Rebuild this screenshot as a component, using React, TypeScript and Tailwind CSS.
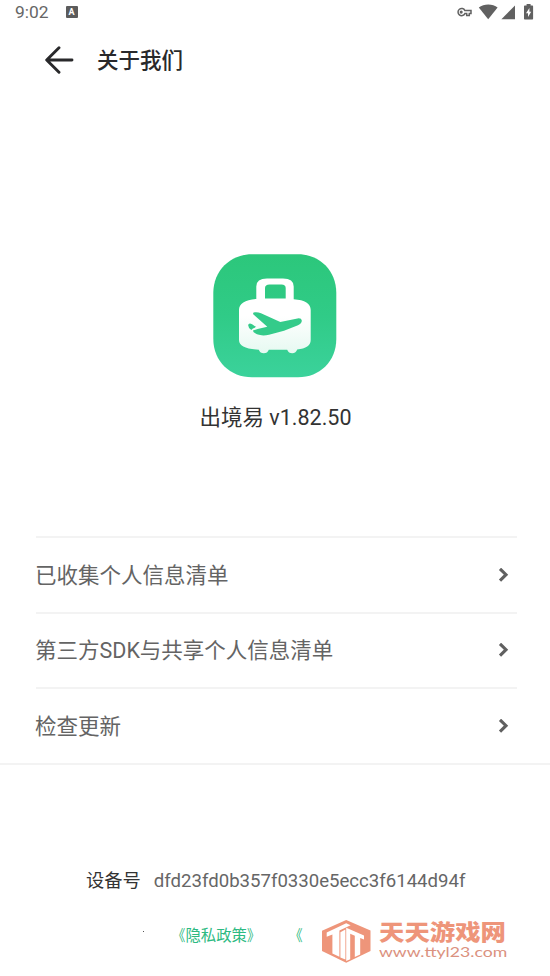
const rows = ["已收集个人信息清单", "第三方SDK与共享个人信息清单", "检查更新"];

function StatusBar() {
  return (
    <div className="flex h-6 items-center pl-[15px] pr-[14px] text-[#666666]">
      <span className="text-[17.4px] leading-6">9:02</span>
      <span className="ml-[17px] flex h-3 w-3 items-center justify-center rounded-[1px] bg-[#5c5c5c] text-[9px] leading-3 font-bold text-white">
        A
      </span>
      <svg
        className="ml-auto"
        width="80"
        height="18"
        viewBox="0 0 80 18"
        fill="#616161"
      >
        <g fill="none" stroke="#616161" strokeWidth="1.5">
          <path d="M8.9 7.6a3.6 3.6 0 1 0 0 3h1.8v2h2.6v-2h1.7V7.6z" />
          <circle cx="5.2" cy="9.1" r="0.8" />
        </g>
        <path d="M32.2 16.2 22.8 4.6c5-4.1 14-4.1 18.8 0z" />
        <path d="M45.4 16.2 59 2.5v13.7z" />
        <path d="M70.6 2.6V1.1h4v1.5h1.5c.6 0 1 .4 1 1v11.9c0 .6-.4 1-1 1H69c-.6 0-1-.4-1-1V3.6c0-.6.4-1 1-1z" />
        <path fill="#fff" d="M73.4 5 70 10.2h2v3.9l3.2-5.3h-1.8z" />
      </svg>
    </div>
  );
}

function Logo() {
  return (
    <svg width="124" height="124" viewBox="0 0 124 124">
      <defs>
        <linearGradient id="tile" x1="0" y1="0" x2="0" y2="1">
          <stop offset="0" stopColor="#2cc77b" />
          <stop offset="0.5" stopColor="#30cb87" />
          <stop offset="1" stopColor="#3bd29b" />
        </linearGradient>
        <linearGradient id="bag" x1="0" y1="0" x2="0" y2="1">
          <stop offset="0.5" stopColor="#ffffff" />
          <stop offset="1" stopColor="#e6f9f1" />
        </linearGradient>
      </defs>
      <path
        fill="url(#tile)"
        d="M39 0.3H85C107 0.3 123.3 17 123.3 39V85C123.3 107 107 123.3 85 123.3H39C17 123.3 0.3 107 0.3 85V39C0.3 17 17 0.3 39 0.3Z"
      />
      <path
        fill="url(#bag)"
        fillRule="evenodd"
        d="M43.3 45V32.5Q43.3 24.5 54 24.5H70Q80.7 24.5 80.7 32.5V45.2C92 46 97.7 49.5 97.7 56V86C97.7 91.5 93 94.5 84.2 95.6Q83 99.3 79.3 99.3Q75.5 99.3 74.2 95.7H55.8Q54.5 99.3 50.8 99.3Q47.1 99.3 45.8 95.8C33 95 26 92 26 86V56C26 49.5 32 46 43.3 45ZM52 44.6H72.7V34Q72.7 30.4 68.5 30.4H56.5Q52 30.4 52 34Z"
      />
      <path
        fill="#34cb8a"
        d="M40.2 60.2Q39.6 58.2 42 58.2Q45 57.9 48 59.2L67.3 67.9L84.5 64.4Q88.5 63.8 88.8 66.5Q88.9 69.2 85 71.2L71 76.8L56 80.8Q49 82.3 44 80.3Q39.5 78.2 40 76.5L44.6 75L54.3 72.8Z"
      />
      <path
        fill="#34cb8a"
        d="M35.1 70.9Q36 68.3 39.1 70.2L43.2 73.1Q39.2 74 38.3 76Q35.4 74.3 35.1 70.9Z"
      />
    </svg>
  );
}

function Watermark() {
  return (
    <div className="flex h-12 w-[190px] items-start">
      <svg className="mt-px" width="50" height="44" viewBox="0 0 50 44">
        <path fill="#ee957a" d="M24.2 0 48.5 10.5V31L24.2 42.7 0 31V10.8z" />
        <path
          fill="#fff"
          d="M4.7 12.4 24.2 3.2l4.4 2-11.2 5.3v26.3L10.4 33.6V14.4l-5.7 2.4z"
        />
        <path fill="#fff" d="M18.4 12.2 23.4 9.6v30l-5-2.2z" />
        <path
          fill="#fff"
          d="M24.2 7.8 42 15.4v4.2l-3.8-1.6v16.4l-5.4 2.5V15.8l-4.6-2v25.4l-4 1.8z"
        />
      </svg>
      <div className="ml-[7px] w-[128px] pt-[2px]">
        <div className="h-[23px] scale-y-[0.85] text-[25.4px] leading-[23px] font-black whitespace-nowrap text-[#ee957a]">
          天天游戏网
        </div>
        <div className="h-[16px] w-[98px] origin-left scale-x-[1.28] font-[Lato,sans-serif] text-[13.8px] leading-[16px] whitespace-nowrap text-[#db9280]">
          www.ttyl23.com
        </div>
      </div>
    </div>
  );
}

export default function App() {
  return (
    <div className="flex h-[976px] w-[550px] flex-col overflow-hidden bg-white font-[Roboto,'Noto_Sans_CJK_SC',sans-serif]">
      <StatusBar />
      <header className="flex h-[72px] items-center pl-[45px]">
        <svg
          width="29"
          height="28"
          viewBox="0 0 29 28"
          fill="none"
          stroke="#29292b"
          strokeWidth="2.9"
          strokeLinecap="round"
          strokeLinejoin="round"
        >
          <path d="M14 1.7 1.7 14 14 26.3M2 14h25" />
        </svg>
        <h1 className="ml-[23px] pt-[2px] text-[21.5px] leading-8 font-medium text-[#29292b]">
          关于我们
        </h1>
      </header>

      <div className="flex h-[440px] flex-col items-center pt-[158px]">
        <Logo />
        <p className="mt-[24px] pl-px text-[21.5px] leading-8 text-[#333333]">
          出境易 v1.82.50
        </p>
      </div>

      <ul className="flex flex-col border-b-2 border-[#f3f3f3] text-[#646464]">
        {rows.map((row) => (
          <li
            key={row}
            className="mr-[33px] ml-[36px] flex h-[75.6px] items-center justify-between border-t-2 border-[#f3f3f3] pr-[8px]"
          >
            <span className="-ml-px pt-[2px] text-[21.5px] leading-8">{row}</span>
            <svg
              width="11"
              height="14"
              viewBox="0 0 11 14"
              fill="none"
              stroke="#606060"
              strokeWidth="3.1"
            >
              <path d="M2 0.8 8 6.7 2 12.6" />
            </svg>
          </li>
        ))}
      </ul>

      <div className="mt-[102px] flex h-7 items-center pl-[86px] text-[18.3px] leading-7">
        <span className="text-[#333333]">设备号</span>
        <span className="ml-[13px] text-[18.6px] text-[#666666]">
          dfd23fd0b357f0330e5ecc3f6144d94f
        </span>
      </div>

      <footer className="mt-[24px] flex items-start pl-[143px] text-[15.4px] leading-[34px] text-[#2dba82]">
        <span className="mt-[12px] h-px w-px bg-[#555555]" />
        <span className="ml-[26px] flex w-[94px] whitespace-nowrap">
          <span className="origin-right scale-x-[0.85]">《</span>
          隐私政策
          <span className="origin-left scale-x-[0.85]">》</span>
        </span>
        <span className="ml-[23px] w-[16px] origin-right scale-x-[0.85]">《</span>
        <div className="ml-[19px]">
          <Watermark />
        </div>
      </footer>
    </div>
  );
}
